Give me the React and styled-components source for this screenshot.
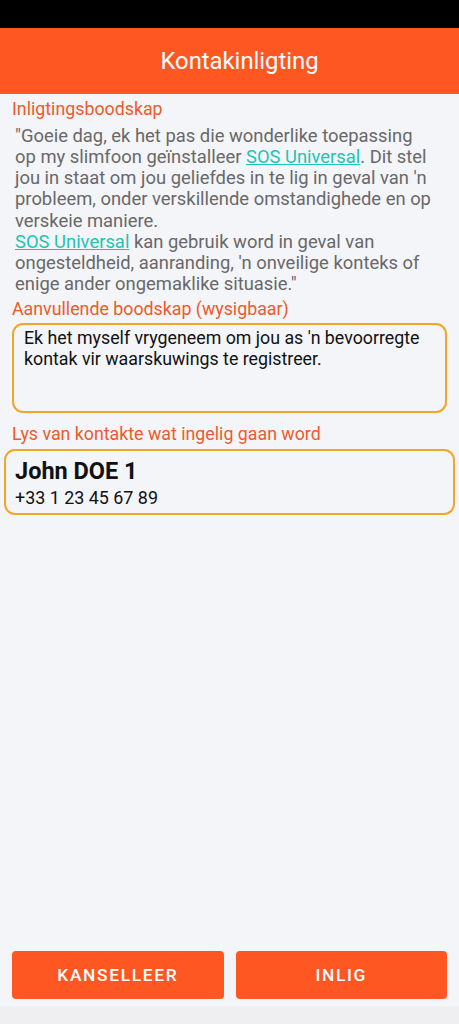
import React, { useState } from 'react';
import styled, { createGlobalStyle } from 'styled-components';

const GlobalStyle = createGlobalStyle`
  html, body {
    margin: 0;
    padding: 0;
    background: #f4f5f9;
    font-family: Roboto, "Noto Sans", "Liberation Sans", sans-serif;
  }
  * { box-sizing: border-box; }
`

const Screen = styled.div`
  width: 459px;
  height: 1024px;
  display: flex;
  flex-direction: column;
  background: #f4f5f9;
`

const StatusBar = styled.div`
  height: 28px;
  background: #000;
`

const Header = styled.header`
  height: 66px;
  background: #ff5722;
  display: flex;
  align-items: center;
  justify-content: center;
  padding-left: 20px;
  color: #fff;
  font-size: 23.8px;
  font-weight: 400;
`

const Content = styled.main`
  flex: 1;
  display: flex;
  flex-direction: column;
  padding: 4px 4px 0;
`

const Label = styled.div`
  color: #f05a28;
  font-size: 17.8px;
  line-height: 21px;
  padding-left: 8px;
  margin-top: ${p => p.$top || 0}px;
  white-space: nowrap;
`

const Message = styled.p`
  margin: 6px 0 0;
  padding: 0 15px 0 11px;
  color: #686868;
  font-size: 18.4px;
  line-height: 21.15px;
`

const Link = styled.a`
  color: #1ec4b4;
  text-decoration: underline;
`

const EditBox = styled.textarea`
  display: block;
  margin: 4px 8px 0;
  width: calc(100% - 16px);
  height: 90px;
  padding: 2px 8px 2px 10px;
  border: 2px solid #f3a52a;
  border-radius: 11px;
  background: transparent;
  color: #111;
  font-family: inherit;
  font-size: 17.8px;
  line-height: 21px;
  resize: none;
  outline: none;
`

const ContactCard = styled.div`
  margin-top: 5px;
  border: 2px solid #f3a52a;
  border-radius: 11px;
  padding: 6px 9px 4px;
  display: flex;
  flex-direction: column;
`

const ContactName = styled.div`
  font-size: 23.5px;
  font-weight: 700;
  color: #111;
  line-height: 28px;
`

const ContactPhone = styled.div`
  font-size: 17.9px;
  color: #111;
  line-height: 22px;
  margin-top: 2px;
`

const ButtonRow = styled.div`
  display: grid;
  grid-template-columns: 1fr 1fr;
  gap: 12px;
  padding: 0 8px;
  margin-top: auto;
  margin-bottom: 7px;
`

const ActionButton = styled.button`
  height: 48px;
  border: none;
  border-radius: 4px;
  background: #ff5722;
  color: #fff;
  font-family: inherit;
  font-size: 17.3px;
  font-weight: 500;
  letter-spacing: 1.7px;
  text-transform: uppercase;
  cursor: pointer;
`

const NavStrip = styled.div`
  height: 18px;
  background: #efeff1;
`

export default function App() {
  const [extra, setExtra] = useState(
    "Ek het myself vrygeneem om jou as 'n bevoorregte kontak vir waarskuwings te registreer."
  )

  return (
    <>
      <GlobalStyle />
      <Screen>
        <StatusBar />
        <Header>Kontakinligting</Header>
        <Content>
          <Label>Inligtingsboodskap</Label>
          <Message>
            "Goeie dag, ek het pas die wonderlike toepassing
            <br />
            op my slimfoon geïnstalleer <Link>SOS Universal</Link>. Dit stel jou in staat om jou
            geliefdes in te lig in geval van 'n probleem, onder verskillende omstandighede en op
            verskeie maniere.
            <br />
            <Link>SOS Universal</Link> kan gebruik word in geval van ongesteldheid, aanranding, 'n onveilige
            konteks of enige ander ongemaklike situasie."
          </Message>
          <Label $top={4}>Aanvullende boodskap (wysigbaar)</Label>
          <EditBox value={extra} onChange={e => setExtra(e.target.value)} />
          <Label $top={10}>Lys van kontakte wat ingelig gaan word</Label>
          <ContactCard>
            <ContactName>John DOE 1</ContactName>
            <ContactPhone>+33 1 23 45 67 89</ContactPhone>
          </ContactCard>
          <ButtonRow>
            <ActionButton>Kanselleer</ActionButton>
            <ActionButton>Inlig</ActionButton>
          </ButtonRow>
        </Content>
        <NavStrip />
      </Screen>
    </>
  )
}
